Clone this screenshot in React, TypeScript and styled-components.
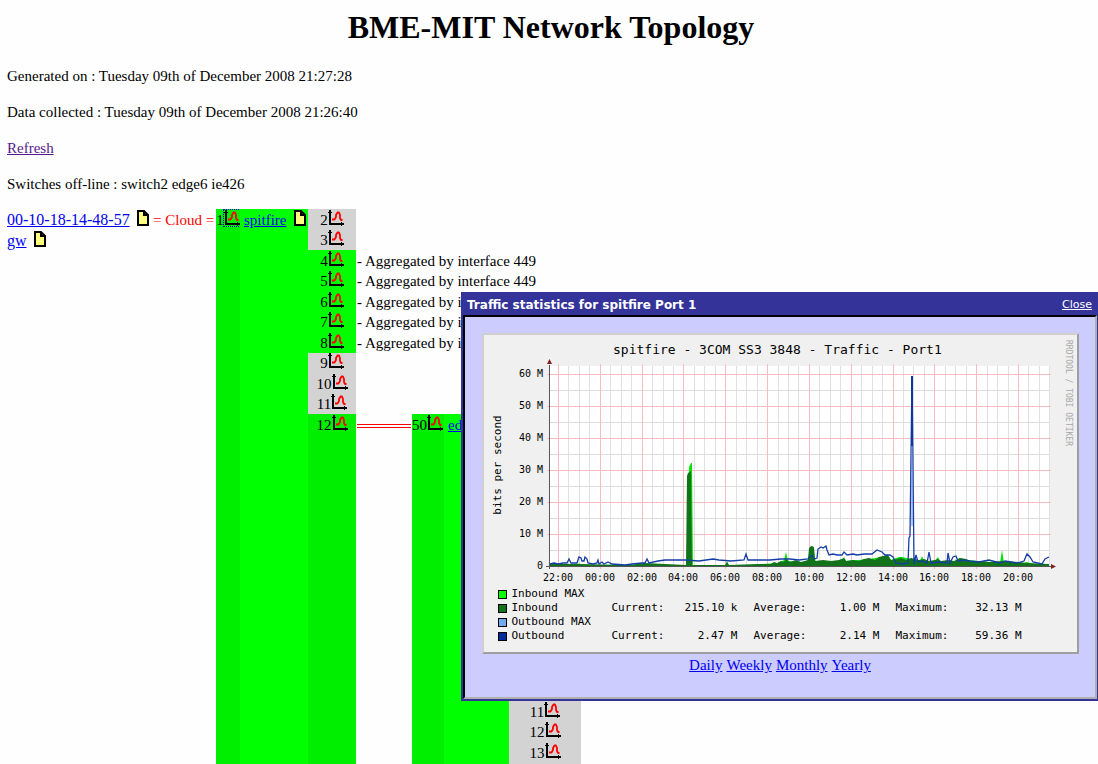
import React from "react";
import styled, { createGlobalStyle, css } from "styled-components";

const Global = createGlobalStyle`
  * { box-sizing: border-box; }
  body {
    margin: 0;
    background: #fefefe;
    color: #000;
    font-family: "Liberation Serif", serif;
    font-size: 15px;
    line-height: 18px;
  }
  a { color: #0000ee; }
`;

const Page = styled.main`
  position: relative;
  min-height: 100vh;
  padding: 0 0 0 7px;
  display: flex;
  flex-direction: column;
  overflow: hidden;
`;

const Title = styled.h1`
  margin: 9px 0 21px;
  padding-right: 3px;
  font-size: 32px;
  line-height: 37px;
  text-align: center;
`;

const Info = styled.p`
  margin: 0 0 18px;
`;

const VisitedLink = styled.a`
  && { color: #551a8b; }
`;

const Topology = styled.section`
  display: flex;
  flex: 1;
  margin-top: -2px;
`;

const Hosts = styled.div`
  width: 145px;
  font-size: 16px;
`;

const Line = styled.div<{ $tall?: boolean }>`
  display: flex;
  align-items: center;
  height: ${(p) => (p.$tall ? 21 : 20)}px;
  white-space: nowrap;
`;

const HostLine = styled(Line)`
  gap: 7px;
`;

const Cloud = styled.div`
  width: 64px;
  padding-left: 1px;
  color: #f00;
`;

const Switch = styled.div`
  display: flex;
`;

const UplinkCell = styled.div<{ $wide?: boolean }>`
  width: ${(p) => (p.$wide ? 32 : 24)}px;
  background: #00ee00;
`;

const NameCell = styled.div<{ $wide?: boolean }>`
  width: ${(p) => (p.$wide ? 65 : 68)}px;
  padding: 0 2px 0 4px;
  background: #00ff00;
`;

const NameLine = styled(Line)`
  justify-content: space-between;
`;

const PortList = styled.div`
  display: flex;
  flex-direction: column;
`;

const PortRow = styled.div<{ $grow?: boolean }>`
  display: flex;
  ${(p) => p.$grow && css`flex: 1;`}
`;

const tones = { idle: "#d3d3d3", up: "#00ff00", trunk: "#00ee00" };
type Tone = keyof typeof tones;

const PortCell = styled.div<{ $tone: Tone }>`
  width: 48px;
  background: ${(p) => tones[p.$tone]};
`;

const PortLine = styled(Line)`
  justify-content: center;
`;

const Note = styled(Line)`
  padding-left: 1px;
`;

const Trunk = styled.div`
  width: 54px;
  height: 4px;
  margin: 10px 1px 0;
  border: solid #f00;
  border-width: 1px 0;
`;

const EdgePorts = styled.div`
  width: 72px;
  padding-top: 287px;
  background: #d3d3d3;
`;

const GraphButton = styled.button<{ $focused?: boolean }>`
  display: block;
  width: 16px;
  height: 16px;
  margin-bottom: 4px;
  padding: 0;
  border: 0;
  background: none;
  outline: ${(p) => (p.$focused ? "1px dotted #0000ee" : "none")};
`;

const Icon = styled.svg`
  display: block;
  flex: none;
`;

const Doc = styled(Icon)`
  margin-bottom: 4px;
`;

const Popup = styled.aside`
  position: absolute;
  top: 292px;
  left: 461px;
  right: 0;
  padding: 0 1px 2px 2px;
  background: #333399;
`;

const PopupBar = styled.header`
  display: flex;
  justify-content: space-between;
  align-items: center;
  height: 23px;
  padding: 3px 5px 0 4px;
  color: #fff;
  font: 11px/14px "DejaVu Sans", sans-serif;
`;

const PopupTitle = styled.strong`
  font-size: 12px;
`;

const Close = styled.a`
  && { color: #fff; }
`;

const PopupBody = styled.div`
  display: flex;
  flex-direction: column;
  align-items: center;
  height: 384px;
  padding-top: 16px;
  border: 2px solid;
  border-color: #000 #b0b0b0 #b0b0b0 #000;
  background: #ccccff;
`;

const Graph = styled.figure`
  width: 597px;
  height: 321px;
  margin: 0;
  border: 2px solid;
  border-color: #cfcfcf #9f9f9f #9f9f9f #cfcfcf;
  background: #f0f0f0;
  font-family: "DejaVu Sans Mono", monospace;
`;

const Plot = styled.svg`
  display: block;
  font-family: "DejaVu Sans Mono", monospace;
`;

const Legend = styled.figcaption`
  padding: 2px 0 0 14px;
  font-size: 11px;
  line-height: 14px;
`;

const LegendRow = styled.div`
  display: flex;
  align-items: center;
  height: 14px;
`;

const LegendName = styled.span`
  width: 100px;
`;

const Value = styled.span`
  width: 70px;
  margin-right: 16px;
  text-align: right;
`;

const StatName = styled.span`
  width: 56px;
`;

const Swatch = styled.span<{ $color: string }>`
  width: 9px;
  height: 9px;
  margin-right: 5px;
  border: 1px solid #000;
  background: ${(p) => p.$color};
`;

const Ranges = styled.nav`
  display: flex;
  gap: 4px;
  margin-top: 2px;
`;

function PortGraph({ port, focused }: { port: number; focused?: boolean }) {
  return (
    <GraphButton $focused={focused} aria-label={`Traffic of port ${port}`}>
      <Icon width="16" height="16" viewBox="0 0 16 16" fill="none">
        <path d="M2 1V15M1 14H15" stroke="#000" strokeWidth="2" />
        <path d="M0 3V2H1V0H3V2H4V3ZM13 12H14V13H16V15H14V16H13Z" fill="#000" />
        <path d="M4 9.5H6.5L8 7V5L9.5 2.5H11L12 5V8L13 10H14.5" stroke="#f00" strokeWidth="1.8" strokeLinejoin="bevel" />
      </Icon>
    </GraphButton>
  );
}

function DocIcon() {
  return (
    <Doc width="12" height="16" viewBox="0 0 12 16">
      <path d="M1 1H7L11 5V15H1Z" fill="#ffff7f" stroke="#000" strokeWidth="2" />
      <path d="M7 1V5H11" fill="none" stroke="#000" strokeWidth="2" />
    </Doc>
  );
}

const aggregated = "- Aggregated by interface 449";

const ports: { n: number; tone: Tone; note?: string }[] = [
  { n: 2, tone: "idle" },
  { n: 3, tone: "idle" },
  { n: 4, tone: "up", note: aggregated },
  { n: 5, tone: "up", note: aggregated },
  { n: 6, tone: "up", note: aggregated },
  { n: 7, tone: "up", note: aggregated },
  { n: 8, tone: "up", note: aggregated },
  { n: 9, tone: "idle" },
  { n: 10, tone: "idle" },
  { n: 11, tone: "idle" },
];

/* Plot coordinates: origin at the crossing of the axes, 32 units per 10 Mbit/s, 42 units per two hours. */
const outbound =
  "1,-2 5,-3 9,-2 14,-3 18,-3 20,-7 22,-3 28,-3 30,-9 32,-8 33,-5 35,-5 36,-9 38,-7 39,-3 44,-2 48,-3 49,-6 50,-2 53,-4 55,-2 59,-4 63,-2 76,-1 83,-2 93,-3 96,-3 98,-7 100,-3 109,-5 116,-6 136,-6 150,-5 164,-7 170,-6 182,-5 195,-6 197,-12 199,-6 221,-6 232,-7 241,-7 250,-6 259,-7 263,-11 265,-7 268,-8 269,-17 272,-19 274,-18 277,-20 278,-16 280,-11 284,-12 288,-11 293,-11 295,-14 298,-11 304,-12 308,-11 315,-12 323,-12 328,-16 333,-14 336,-11 341,-11 344,-9 347,-3 354,-2 359,-3 360,-28 361,-30 363,-190 365,-2 367,-11 369,-4 373,-5 378,-3 380,-14 382,-3 390,-4 398,-3 399,-13 401,-3 404,-9 407,-10 409,-5 415,-6 421,-5 430,-4 440,-6 451,-3 456,-5 462,-4 468,-3 475,-5 478,-12 481,-9 484,-4 493,-2 496,-7 500,-9";
const inbound =
  "0,0 0,-2 12,-2 30,-2 80,-1 96,-3 137,-1 138,-90 139,-93 142,-95 143,-1 176,-1 178,-4 180,-1 210,-2 222,-2 225,-4 228,-3 232,-5 235,-4 237,-7 241,-4 247,-6 252,-4 259,-6 260,-18 262,-20 265,-19 266,-5 274,-6 282,-5 290,-6 295,-8 297,-5 304,-6 310,-5 315,-7 320,-8 326,-6 330,-9 334,-10 339,-11 342,-6 348,-7 352,-8 357,-6 362,-8 370,-6 375,-7 380,-5 386,-6 389,-7 392,-5 399,-6 405,-5 411,-8 417,-7 421,-5 430,-5 440,-4 453,-5 470,-4 478,-3 500,-2 500,0";
const inboundMax =
  "12,0 29,0 30,-4 31,0 138,0 140,-99 142,-103 143,-103 144,0 176,0 178,-5 180,0 230,-3 235,-6 237,-14 239,-5 258,-3 261,-17 264,-20 267,-3 293,-5 295,-9 297,-5 321,-7 332,-9 338,-11 342,-6 350,-9 353,-9 371,-5 373,-10 375,-5 386,-5 389,-9 391,-5 408,-5 410,-8 419,-6 451,-3 453,-16 455,-3 475,-3 478,-4 490,0";

const megabits = [0, 10, 20, 30, 40, 50, 60];
const hours = ["22:00", "00:00", "02:00", "04:00", "06:00", "08:00", "10:00", "12:00", "14:00", "16:00", "18:00", "20:00"];
const hourX = (i: number) => 9 + Math.round(i * 41.82);
const halfHours = Array.from({ length: 48 }, (_, i) => Math.round(9 + i * 10.455));

function TrafficPlot() {
  return (
    <Plot width="593" height="250" viewBox="0 0 593 250">
      <text x="129" y="19" fontSize="13">spitfire - 3COM SS3 3848 - Traffic - Port1</text>
      <text transform="translate(582 5) rotate(90)" fontSize="8" fill="#a8a8a8">RRDTOOL / TOBI OETIKER</text>
      <text transform="translate(17 130) rotate(-90)" fontSize="11" textAnchor="middle">bits per second</text>
      <g transform="translate(65 231)">
        <rect x="0" y="-200" width="500" height="200" fill="#fff" />
        <g shapeRendering="crispEdges" strokeWidth="1">
          {halfHours.map((x, i) => i % 4 !== 0 && (
            <path key={x} d={`M${x}.5 -200V1`} stroke="#e0e0e0" />
          ))}
          {megabits.slice(0, 6).map((m) => (
            <path key={m} d={`M0 ${-15.5 - m * 3.2}H500`} stroke="#dcdcdc" />
          ))}
          {hours.map((h, i) => (
            <path key={h} d={`M${hourX(i)}.5 -202V3`} stroke="#f8bcc0" />
          ))}
          {megabits.map((m) => (
            <path key={m} d={`M-2 ${0.5 - m * 3.2}H502`} stroke="#f8bcc0" />
          ))}
        </g>
        <polygon points={inboundMax} fill="#00e400" />
        <polygon points={inbound} fill="#13731a" />
        <polyline points={outbound} fill="none" stroke="#153da8" strokeWidth="1.3" />
        <path d="M363 -190V-120" stroke="#0f36a0" strokeWidth="2" />
        <path d="M363 -120V-40" stroke="#6f93d8" strokeWidth="1" />
        <path d="M0.5 -201V3M-3 0.5H502" stroke="#555" shapeRendering="crispEdges" />
        <path d="M-2 -202L0.5 -207L3 -202ZM502 -2L507 0.5L502 3Z" fill="#802020" />
        {megabits.map((m) => (
          <text key={m} x="-6" y={3 - m * 3.2} fontSize="10" textAnchor="end">{m ? `${m} M` : "0"}</text>
        ))}
        {hours.map((h, i) => (
          <text key={h} x={hourX(i)} y="15" fontSize="10" textAnchor="middle">{h}</text>
        ))}
      </g>
    </Plot>
  );
}

const series = [
  { name: "Inbound MAX", color: "#00ff00" },
  { name: "Inbound", color: "#13731a", stats: [["Current:", "215.10 k"], ["Average:", "1.00 M"], ["Maximum:", "32.13 M"]] },
  { name: "Outbound MAX", color: "#73a9f2" },
  { name: "Outbound", color: "#002a97", stats: [["Current:", "2.47 M"], ["Average:", "2.14 M"], ["Maximum:", "59.36 M"]] },
];

export default function App() {
  return (
    <Page>
      <Global />
      <Title>BME-MIT Network Topology</Title>
      <Info>Generated on : Tuesday 09th of December 2008 21:27:28</Info>
      <Info>Data collected : Tuesday 09th of December 2008 21:26:40</Info>
      <Info><VisitedLink href="#refresh">Refresh</VisitedLink></Info>
      <Info>Switches off-line : switch2 edge6 ie426</Info>
      <Topology>
        <Hosts>
          <HostLine $tall><a href="#host">00-10-18-14-48-57</a><DocIcon /></HostLine>
          <HostLine $tall><a href="#gw">gw</a><DocIcon /></HostLine>
        </Hosts>
        <Cloud><Line $tall>= Cloud =</Line></Cloud>
        <Switch>
          <UplinkCell><PortLine $tall>1<PortGraph port={1} focused /></PortLine></UplinkCell>
          <NameCell><NameLine $tall><a href="#spitfire">spitfire</a><DocIcon /></NameLine></NameCell>
          <PortList>
            {ports.map((p, i) => (
              <PortRow key={p.n}>
                <PortCell $tone={p.tone}>
                  <PortLine $tall={i % 2 === 0}>{p.n}<PortGraph port={p.n} /></PortLine>
                </PortCell>
                {p.note && <Note $tall={i % 2 === 0}>{p.note}</Note>}
              </PortRow>
            ))}
            <PortRow $grow>
              <PortCell $tone="trunk"><PortLine $tall>12<PortGraph port={12} /></PortLine></PortCell>
              <Trunk />
              <UplinkCell $wide><Line $tall>50<PortGraph port={50} /></Line></UplinkCell>
              <NameCell $wide><Line $tall><a href="#edge">edge</a></Line></NameCell>
              <EdgePorts>
                {[11, 12, 13].map((n, i) => (
                  <PortLine key={n} $tall={i % 2 === 0}>{n}<PortGraph port={n} /></PortLine>
                ))}
              </EdgePorts>
            </PortRow>
          </PortList>
        </Switch>
      </Topology>
      <Popup>
        <PopupBar>
          <PopupTitle>Traffic statistics for spitfire Port 1</PopupTitle>
          <Close href="#close">Close</Close>
        </PopupBar>
        <PopupBody>
          <Graph>
            <TrafficPlot />
            <Legend>
              {series.map((s) => (
                <LegendRow key={s.name}>
                  <Swatch $color={s.color} />
                  <LegendName>{s.name}</LegendName>
                  {s.stats?.map(([label, value]) => (
                    <React.Fragment key={label}>
                      <StatName>{label}</StatName>
                      <Value>{value}</Value>
                    </React.Fragment>
                  ))}
                </LegendRow>
              ))}
            </Legend>
          </Graph>
          <Ranges>
            <a href="#daily">Daily</a>
            <a href="#weekly">Weekly</a>
            <a href="#monthly">Monthly</a>
            <a href="#yearly">Yearly</a>
          </Ranges>
        </PopupBody>
      </Popup>
    </Page>
  );
}
